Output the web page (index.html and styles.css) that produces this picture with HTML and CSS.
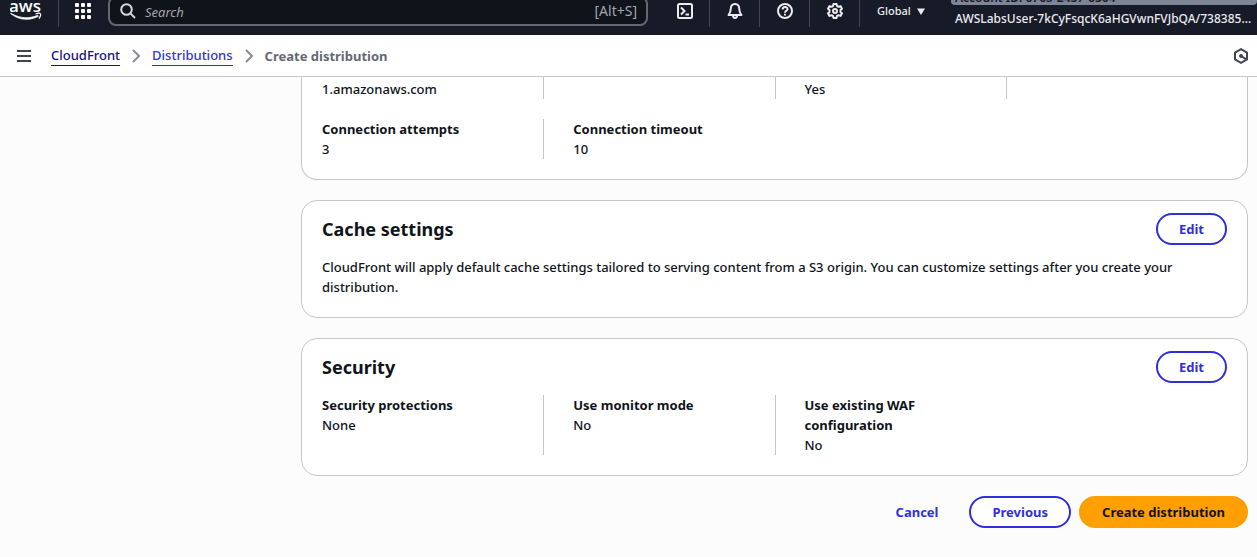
FILE: index.html
```html
<!DOCTYPE html>
<html lang="en">
<head>
<meta charset="utf-8">
<meta name="viewport" content="width=device-width, initial-scale=1">
<title>Create distribution</title>
<link rel="stylesheet" href="styles.css">
</head>
<body>
<header class="topbar">
  <div class="topbar-inner">
    <a class="logo" href="#" aria-label="AWS home">
      <svg width="32" height="24" viewBox="0 0 32 24">
        <text class="logo-text" x="15" y="13" text-anchor="middle">aws</text>
        <path d="M.5 14.500C9 21.500 20 22 28.500 17.200L27.700 16.300C19 20 10 19.500 .8 14.200Z" fill="#fff" stroke="#fff" stroke-width=".7"/>
        <path d="M25.500 15c2.200-.9 4.500-.7 5-.2s.1 3-1.600 4.700" fill="none" stroke="#fff" stroke-width="1.200"/>
      </svg>
    </a>
    <button class="nav-button services" aria-label="Services">
      <svg width="16" height="16" viewBox="0 0 16 16" fill="#fff"><rect width="4" height="4" rx="1"/><rect x="6" width="4" height="4" rx="1"/><rect x="12" width="4" height="4" rx="1"/><rect y="6" width="4" height="4" rx="1"/><rect x="6" y="6" width="4" height="4" rx="1"/><rect x="12" y="6" width="4" height="4" rx="1"/><rect y="12" width="4" height="4" rx="1"/><rect x="6" y="12" width="4" height="4" rx="1"/><rect x="12" y="12" width="4" height="4" rx="1"/></svg>
    </button>
    <label class="search">
      <svg width="16" height="16" viewBox="0 0 16 16" fill="none" stroke="#d5d5dd" stroke-width="2"><circle cx="6.500" cy="6.500" r="5.300"/><path d="M10.400 10.400 15 15"/></svg>
      <input type="text" placeholder="Search" aria-label="Search">
      <span class="shortcut">[Alt+S]</span>
    </label>
    <nav class="tools" aria-label="Tools">
      <button class="nav-button" aria-label="CloudShell"><svg class="icon" viewBox="0 0 16 16"><rect x="1" y="1" width="14" height="14" rx="1.500"/><path d="M4 4.500 7.500 8 4 11.500M8.500 11.500H12"/></svg></button>
      <button class="nav-button" aria-label="Notifications"><svg class="icon" viewBox="0 0 16 16"><path d="M8 1C5 1 3.800 3.200 3.800 5.500 3.800 8.500 3 10 1.500 12h13C13 10 12.200 8.500 12.200 5.500 12.200 3.200 11 1 8 1Z" stroke-linejoin="round"/><path d="M6 12.500c0 3.300 4 3.300 4 0" /></svg></button>
      <button class="nav-button" aria-label="Help"><svg class="icon" viewBox="0 0 16 16"><circle cx="8" cy="8" r="7"/><path d="M5.600 6.500C5.600 3.200 10.500 3.300 10.500 6.200 10.500 7.800 8 7.700 8 9.700M8 10.800v1.700"/></svg></button>
      <button class="nav-button" aria-label="Settings"><svg class="icon" viewBox="0 0 16 16"><path stroke-linejoin="round" d="M6.500 1h3l.5 2 1.500.8 2-.7 1.500 2.600L13.500 7v2l1.500 1.300-1.500 2.600-2-.7-1.500.8-.5 2h-3L6 13l-1.500-.8-2 .7L1 10.300 2.500 9V7L1 5.700l1.500-2.600 2 .7L6 3z"/><circle cx="8" cy="8" r="2"/></svg></button>
    </nav>
    <button class="region">Global <svg width="8" height="7" viewBox="0 0 8 7"><path d="M0 .5h8L4 7Z" fill="#ebebf0"/></svg></button>
    <div class="account">
      <span class="account-id">Account ID: 6765-2437-6364</span>
      <span class="user">AWSLabsUser-7kCyFsqcK6aHGVwnFVJbQA/738385...</span>
    </div>
  </div>
</header>
<div class="crumbbar">
  <button class="plain" aria-label="Open navigation"><svg width="14" height="12" viewBox="0 0 14 12" fill="#424650"><path d="M0 0h14v2H0zM0 5h14v2H0zM0 10h14v2H0z"/></svg></button>
  <nav class="crumbs" aria-label="Breadcrumbs">
    <a class="visited" href="#">CloudFront</a>
    <svg class="chevron" viewBox="0 0 8 14"><path d="m1 1 6 6-6 6"/></svg>
    <a href="#">Distributions</a>
    <svg class="chevron" viewBox="0 0 8 14"><path d="m1 1 6 6-6 6"/></svg>
    <span class="current">Create distribution</span>
  </nav>
  <button class="plain" aria-label="Open tools"><svg width="16" height="16" viewBox="0 0 16 16" fill="none" stroke="#424650" stroke-width="2"><path d="M8 1.200 14 4.600v6.800L8 14.800 2 11.400V4.600Z"/><circle cx="8" cy="8" r="1.300" fill="#424650" stroke-width="1.200"/><path d="m8 8 5 3.200"/></svg></button>
</div>
<main class="content">
  <section class="card card-continued">
    <dl class="columns">
      <div><dd>1.amazonaws.com</dd></div><div></div><div><dd>Yes</dd></div><div></div>
    </dl>
    <dl class="columns">
      <div><dt>Connection attempts</dt><dd>3</dd></div>
      <div><dt>Connection timeout</dt><dd>10</dd></div>
    </dl>
  </section>
  <section class="card">
    <div class="card-header"><h2>Cache settings</h2><button class="button">Edit</button></div>
    <p>CloudFront will apply default cache settings tailored to serving content from a S3 origin. You can customize settings after you create your distribution.</p>
  </section>
  <section class="card">
    <div class="card-header"><h2>Security</h2><button class="button">Edit</button></div>
    <dl class="columns">
      <div><dt>Security protections</dt><dd>None</dd></div>
      <div><dt>Use monitor mode</dt><dd>No</dd></div>
      <div><dt>Use existing WAF configuration</dt><dd>No</dd></div>
    </dl>
  </section>
  <div class="actions">
    <button class="button link">Cancel</button>
    <button class="button">Previous</button>
    <button class="button primary">Create distribution</button>
  </div>
</main>
</body>
</html>
```
FILE: styles.css
```css
* { box-sizing: border-box; }
body {
  margin: 0;
  background: #fcfcfd;
  color: #0f141a;
  font: 500 13px/20px "Noto Sans", "Open Sans", sans-serif;
}
button, input { font: inherit; }
button { cursor: pointer; }
svg { display: block; flex: none; }

.topbar {
  display: flex;
  align-items: flex-end;
  height: 35px;
  overflow: hidden;
  background: #171b27;
}
.topbar-inner {
  display: flex;
  align-items: center;
  flex: 1;
  min-width: 0;
  height: 48px;
}
.logo {
  display: flex;
  align-items: center;
  width: 59px;
  height: 32px;
  padding-left: 10px;
  border-right: 1px solid #424650;
}
.logo-text { fill: #fff; font: 600 17px "Open Sans", sans-serif; }
.nav-button {
  display: flex;
  align-items: center;
  justify-content: center;
  width: 50px;
  height: 32px;
  padding: 0;
  border: 0;
  border-right: 1px solid #424650;
  background: none;
}
.nav-button.services { width: 49px; padding-right: 2px; border: 0; }
.icon { width: 16px; height: 16px; fill: none; stroke: #ebebf0; stroke-width: 2; }
.search {
  display: flex;
  align-items: center;
  flex: 1;
  min-width: 0;
  height: 30px;
  padding: 0 9px 0 10px;
  border: 2px solid #656871;
  border-radius: 8px;
  background: #0f141a;
}
.search input {
  flex: 1;
  min-width: 0;
  padding: 2px 9px 0;
  border: 0;
  outline: 0;
  background: none;
  color: #fff;
  font-style: italic;
  font-weight: 400;
}
.search input::placeholder { color: #a4a4ad; opacity: 1; }
.shortcut { color: #a4a4ad; font-size: 14px; font-weight: 400; }
.tools { display: flex; margin-left: 12px; }
.region {
  display: flex;
  align-items: center;
  gap: 6px;
  width: 91px;
  padding: 0 0 0 17px;
  border: 0;
  background: none;
  color: #ebebf0;
  font-size: 11px;
}
.account {
  display: flex;
  flex-direction: column;
  gap: 4px;
  width: 306px;
  margin-bottom: 8px;
  color: #ebebf0;
  font-size: 12px;
}
.account-id {
  height: 20px;
  padding-left: 4px;
  border-radius: 4px;
  background: #7d8597;
  color: #171b27;
  font-weight: 600;
  line-height: 26px;
}
.user { padding-left: 4px; white-space: nowrap; }

.crumbbar {
  display: flex;
  align-items: center;
  gap: 20px;
  height: 42px;
  padding: 0 8px 0 17px;
  border-bottom: 1px solid #c6c6cd;
  background: #fff;
}
.plain { padding: 0; border: 0; background: none; }
.crumbs { display: flex; align-items: center; flex: 1; gap: 12px; }
.crumbs a { color: #3232e0; border-bottom: 1px solid; line-height: 19px; text-decoration: none; }
.crumbs a.visited { color: #1a0f80; }
.chevron { width: 8px; height: 14px; fill: none; stroke: #8c8c94; stroke-width: 2; }
.current { color: #656871; font-weight: 700; }

.content {
  display: flex;
  flex-direction: column;
  gap: 20px;
  padding: 0 9px 29px 301px;
}
.card {
  padding: 12px 20px 20px;
  border: 1px solid #c6c6cd;
  border-radius: 16px;
  background: #fff;
}
.card-continued {
  display: grid;
  gap: 20px;
  padding-top: 0;
  border-top: 0;
  border-radius: 0 0 16px 16px;
}
.card-continued .columns:first-child dd { padding-top: 2px; }
.card-header {
  display: flex;
  align-items: center;
  justify-content: space-between;
  margin-bottom: 12px;
}
h2 { margin: 0; font-size: 18px; line-height: 24px; }
p, dl, dd { margin: 0; }
.columns {
  display: grid;
  grid-template-columns: repeat(4, 1fr);
  margin: 0 -10px;
}
.columns > div { padding: 0 20px 0 29px; border-left: 1px solid #c6c6cd; }
.columns > div:first-child { padding-left: 10px; border-left: 0; }
dt { font-weight: 700; }

.button {
  height: 32px;
  padding: 0 21px;
  border: 2px solid #2f2fe0;
  border-radius: 20px;
  background: #fff;
  color: #2f2fe0;
  font-weight: 700;
}
.button.link { border-color: transparent; background: none; }
.button.primary { border-color: #ff9f00; background: #ff9f00; color: #0f141a; }
.actions { display: flex; justify-content: flex-end; gap: 8px; }
```
